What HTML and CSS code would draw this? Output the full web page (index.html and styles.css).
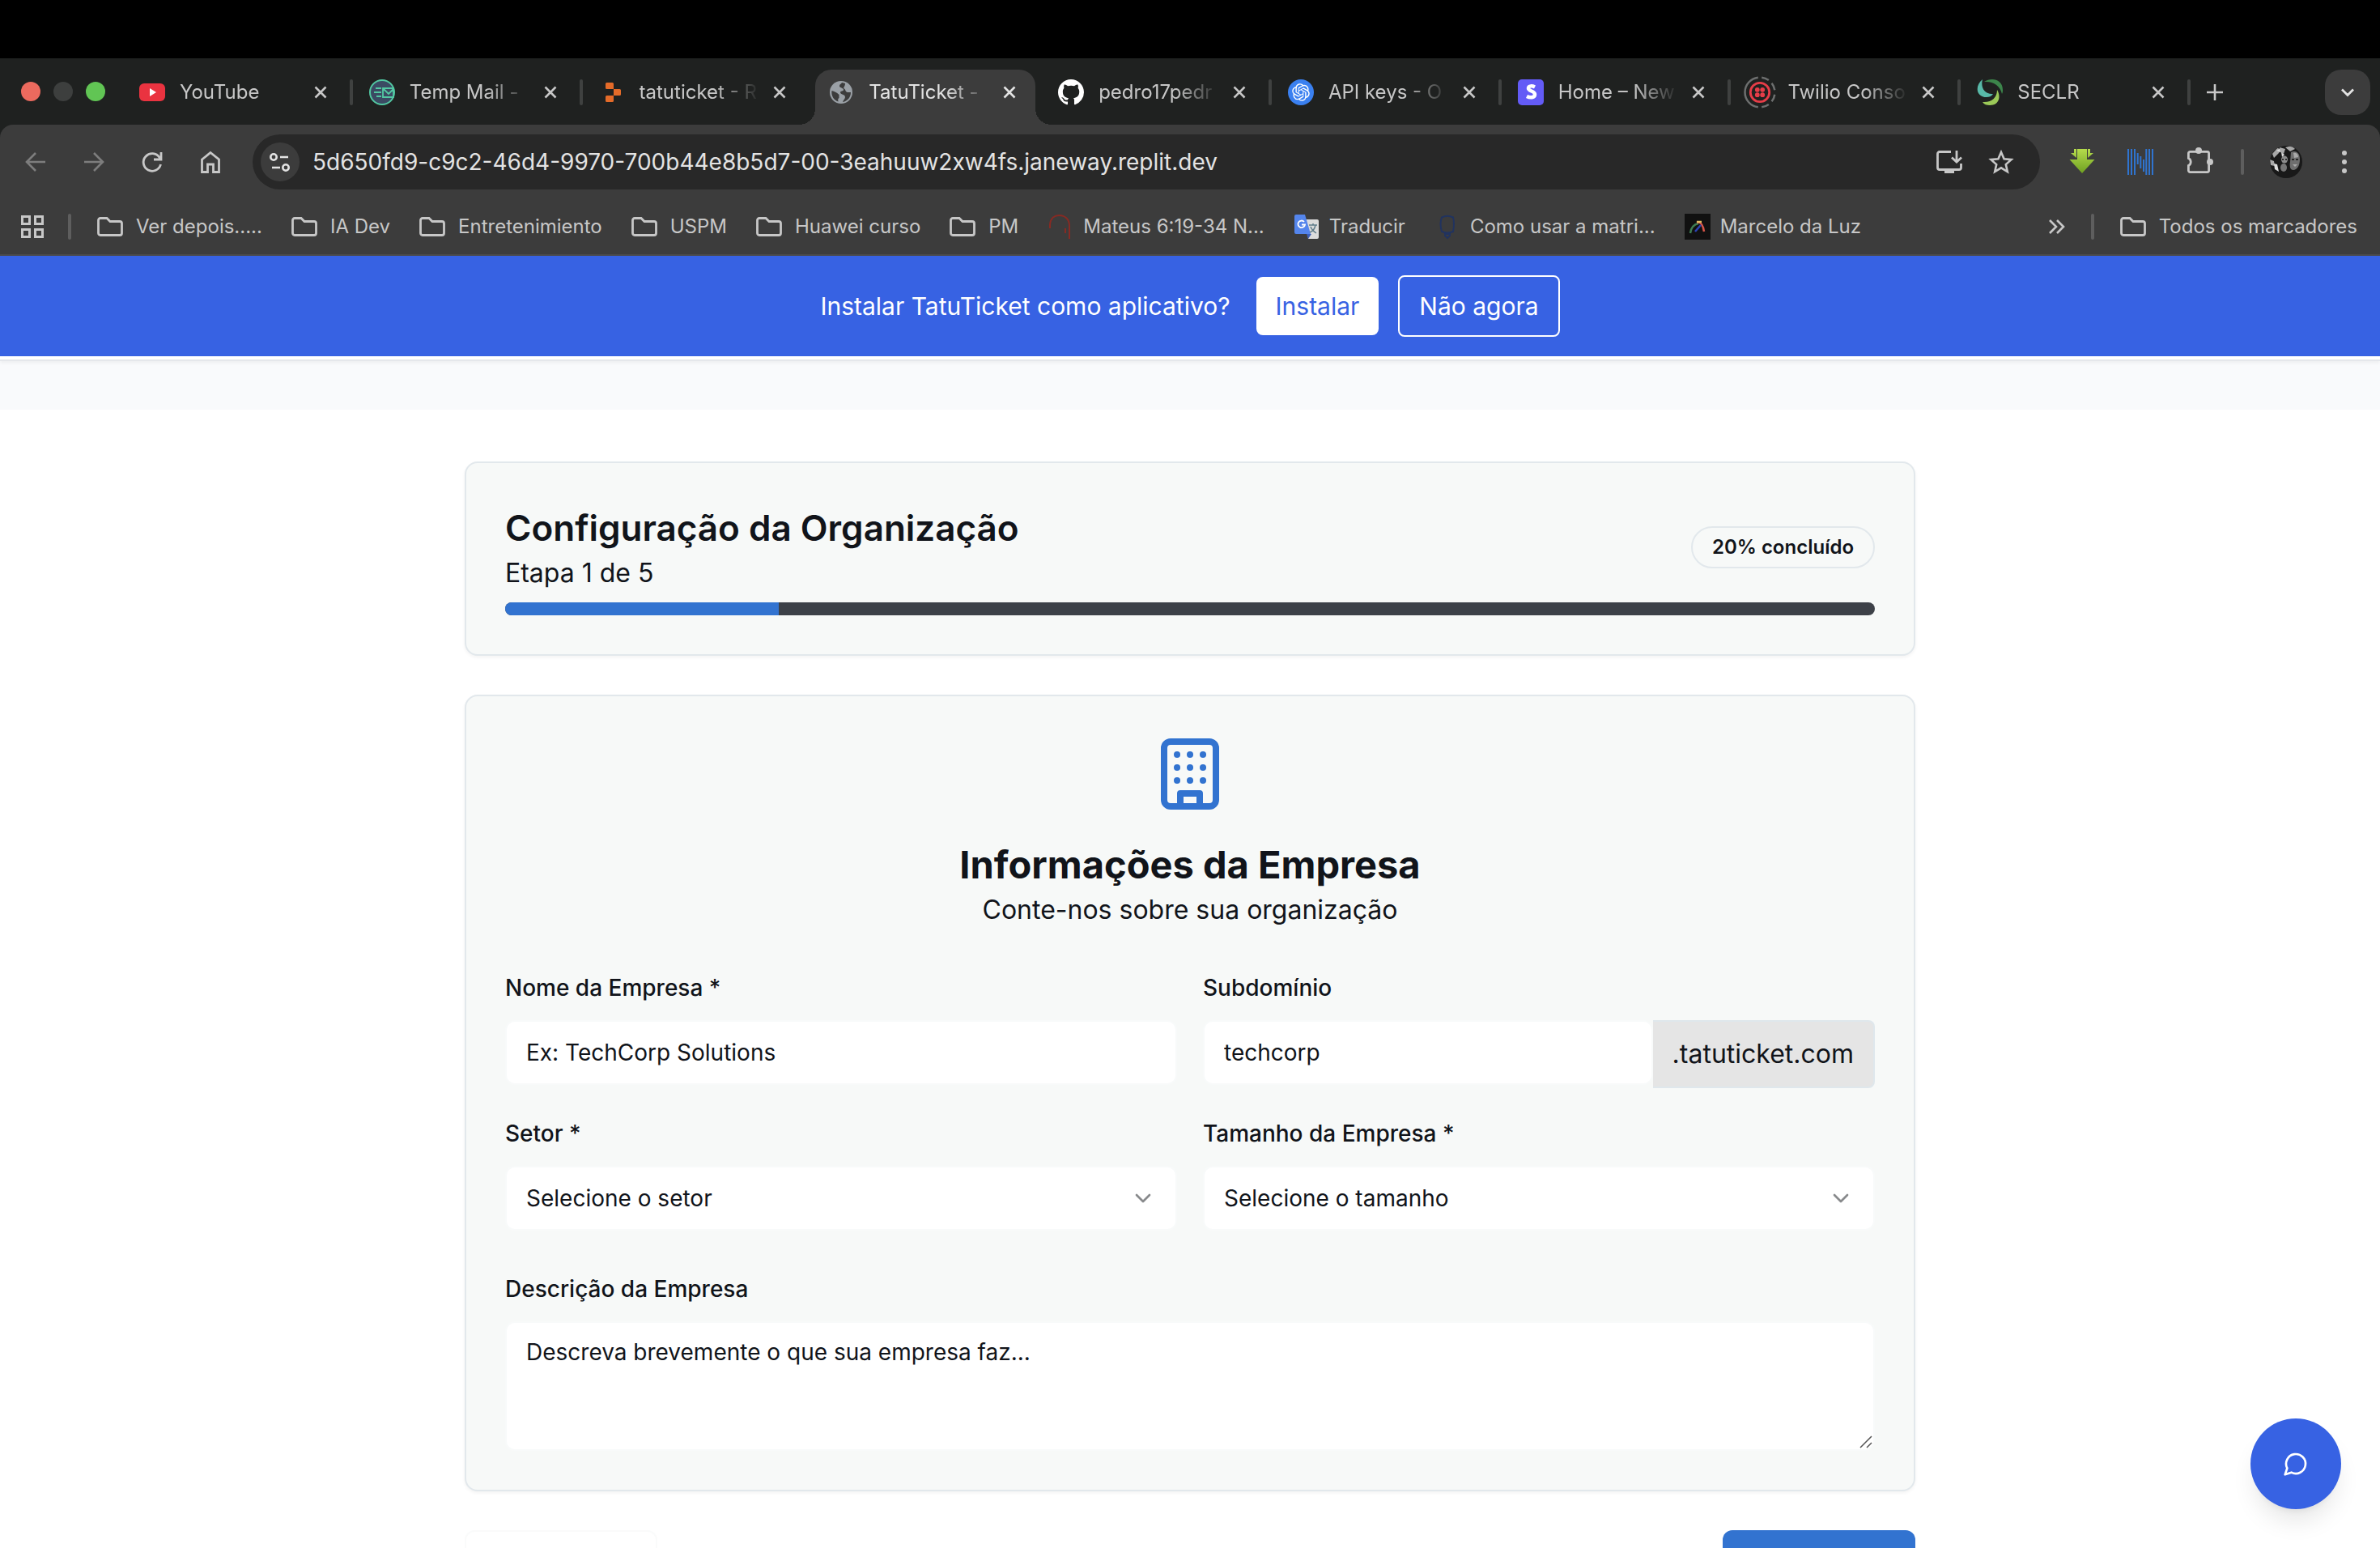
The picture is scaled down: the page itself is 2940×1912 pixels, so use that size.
FILE: index.html
```html
<!DOCTYPE html>
<html lang="pt-BR">
<head>
<meta charset="utf-8">
<meta name="viewport" content="width=device-width, initial-scale=1">
<title>TatuTicket - Configuração da Organização</title>
<link rel="stylesheet" href="styles.css">
</head>
<body>
<svg class="sprite" aria-hidden="true">
  <symbol id="close" viewBox="0 0 16 16"><path d="M1.500 1.500l13 13M14.500 1.500l-13 13" fill="none" stroke="currentColor" stroke-width="2.600"/></symbol>
  <symbol id="folder" viewBox="0 0 32 24"><path d="M4 1.500h8l4 4h12a2.500 2.500 0 0 1 2.500 2.500v12a2.500 2.500 0 0 1-2.500 2.500H4A2.500 2.500 0 0 1 1.500 20V4A2.500 2.500 0 0 1 4 1.500z" fill="none" stroke="currentColor" stroke-width="2.800"/></symbol>
  <symbol id="chevron" viewBox="0 0 24 24"><path d="m6 9 6 6 6-6" fill="none" stroke="currentColor" stroke-width="2" stroke-linecap="round" stroke-linejoin="round"/></symbol>
</svg>
<div class="browser">
  <div class="menubar"></div>
  <div class="tabstrip">
    <div class="lights"><span class="light red"></span><span class="light gray"></span><span class="light green"></span></div>
    <div class="tabs">
      <div class="tab">
        <svg class="fav" viewBox="0 0 32 32"><rect y="5" width="32" height="22" rx="6" fill="#ea3340"/><path d="M13 11l8 5-8 5z" fill="#fff"/></svg>
        <span class="tab-title">YouTube</span><button class="x" aria-label="Fechar"><svg><use href="#close"/></svg></button>
      </div>
      <div class="tab">
        <svg class="fav" viewBox="0 0 32 32"><circle cx="16" cy="16" r="15" fill="#3b4a63" stroke="#52c8a2" stroke-width="2"/><path d="M17 11h13v11H17zM18 12l6 6 6-6M8 11h7M6 16h9M9 21h6" fill="none" stroke="#52c8a2" stroke-width="1.800"/></svg>
        <span class="tab-title">Temp Mail -</span><button class="x" aria-label="Fechar"><svg><use href="#close"/></svg></button>
      </div>
      <div class="tab before-active">
        <svg class="fav" viewBox="0 0 32 32"><path d="M9.500 4h7a1.500 1.500 0 0 1 1.500 1.500V12H9.500A1.500 1.500 0 0 1 8 10.500v-5A1.500 1.500 0 0 1 9.500 4zM18 12h7.500a1.500 1.500 0 0 1 1.500 1.500v5a1.500 1.500 0 0 1-1.500 1.500H18zM9.500 20H18v6.500a1.500 1.500 0 0 1-1.500 1.500h-7A1.500 1.500 0 0 1 8 26.500v-5A1.500 1.500 0 0 1 9.500 20z" fill="#e46b29"/></svg>
        <span class="tab-title">tatuticket - R</span><button class="x" aria-label="Fechar"><svg><use href="#close"/></svg></button>
      </div>
      <div class="tab active">
        <svg class="fav" viewBox="0 0 32 32"><circle cx="16" cy="16" r="14" fill="#9aa0a6"/><path d="M17 4c-1 2-3 2-3 4 0 3 5 2 5 5 0 2-4 1-4 3 0 3 6 2 6 6 0 2-2 3-3 6 6-1 10-6 10-12h-4c-3 0-2-4-5-5 1-3 2-3 2-6zM4.500 14c3 1 6 2 9 5v4c-2 1-1 3-1 4.500C7 26 3.500 20 4.500 14z" fill="#3c3c3c"/></svg>
        <span class="tab-title">TatuTicket -</span><button class="x" aria-label="Fechar"><svg><use href="#close"/></svg></button>
      </div>
      <div class="tab">
        <svg class="fav" viewBox="0 0 16 16"><path fill="#fff" d="M8 0C3.580 0 0 3.580 0 8c0 3.540 2.290 6.530 5.470 7.590.4.070.55-.17.55-.38 0-.19-.01-.82-.01-1.490-2.010.37-2.530-.49-2.690-.94-.09-.23-.48-.94-.82-1.130-.28-.15-.68-.52-.01-.53.63-.01 1.080.58 1.230.82.72 1.210 1.870.87 2.330.66.07-.52.28-.87.51-1.070-1.780-.2-3.640-.89-3.640-3.950 0-.87.31-1.590.82-2.150-.08-.2-.36-1.020.08-2.120 0 0 .67-.21 2.200.82.64-.18 1.320-.27 2-.27s1.360.09 2 .27c1.530-1.040 2.200-.82 2.200-.82.44 1.100.16 1.920.08 2.120.51.56.82 1.270.82 2.150 0 3.070-1.870 3.750-3.650 3.950.29.25.54.73.54 1.480 0 1.070-.01 1.930-.01 2.200 0 .21.15.46.55.38A8.010 8.010 0 0 0 16 8c0-4.420-3.580-8-8-8z"/></svg>
        <span class="tab-title">pedro17pedr</span><button class="x" aria-label="Fechar"><svg><use href="#close"/></svg></button>
      </div>
      <div class="tab">
        <svg class="fav" viewBox="0 0 32 32"><circle cx="16" cy="16" r="16" fill="#3a80f0"/><g transform="translate(5.200 5.200) scale(.9)"><path fill="#fff" d="M22.2819 9.8211a5.9847 5.9847 0 0 0-.5157-4.9108 6.0462 6.0462 0 0 0-6.5098-2.9A6.0651 6.0651 0 0 0 4.9807 4.1818a5.9847 5.9847 0 0 0-3.9977 2.9 6.0462 6.0462 0 0 0 .7427 7.0966 5.98 5.98 0 0 0 .511 4.9107 6.051 6.051 0 0 0 6.5146 2.9001A5.9847 5.9847 0 0 0 13.2599 24a6.0557 6.0557 0 0 0 5.7718-4.2058 5.9894 5.9894 0 0 0 3.9977-2.9001 6.0557 6.0557 0 0 0-.7475-7.0729zm-9.022 12.6081a4.4755 4.4755 0 0 1-2.8764-1.0408l.1419-.0804 4.7783-2.7582a.7948.7948 0 0 0 .3927-.6813v-6.7369l2.02 1.1686a.071.071 0 0 1 .038.052v5.5826a4.504 4.504 0 0 1-4.4945 4.4944zm-9.6607-4.1254a4.4708 4.4708 0 0 1-.5346-3.0137l.142.0852 4.783 2.7582a.7712.7712 0 0 0 .7806 0l5.8428-3.3685v2.3324a.0804.0804 0 0 1-.0332.0615L9.74 19.9502a4.4992 4.4992 0 0 1-6.1408-1.6464zM2.3408 7.8956a4.485 4.485 0 0 1 2.3655-1.9728V11.6a.7664.7664 0 0 0 .3879.6765l5.8144 3.3543-2.0201 1.1685a.0757.0757 0 0 1-.071 0l-4.8303-2.7865A4.504 4.504 0 0 1 2.3408 7.872zm16.5963 3.8558L13.1038 8.364 15.1192 7.2a.0757.0757 0 0 1 .071 0l4.8303 2.7913a4.4944 4.4944 0 0 1-.6765 8.1042v-5.6772a.79.79 0 0 0-.407-.667zm2.0107-3.0231l-.142-.0852-4.7735-2.7818a.7759.7759 0 0 0-.7854 0L9.409 9.2297V6.8974a.0662.0662 0 0 1 .0284-.0615l4.8303-2.7866a4.4992 4.4992 0 0 1 6.6802 4.66zM8.3065 12.863l-2.02-1.1638a.0804.0804 0 0 1-.038-.0567V6.0742a4.4992 4.4992 0 0 1 7.3757-3.4537l-.142.0805L8.704 5.459a.7948.7948 0 0 0-.3927.6813zm1.0976-2.3654l2.602-1.4998 2.6069 1.4998v2.9994l-2.5974 1.4997-2.6067-1.4997Z"/></g></svg>
        <span class="tab-title">API keys - O</span><button class="x" aria-label="Fechar"><svg><use href="#close"/></svg></button>
      </div>
      <div class="tab">
        <svg class="fav" viewBox="0 0 32 32"><rect width="32" height="32" rx="5" fill="#635bf6"/><path d="M21 9.500c-3-1.500-8-2-8 1.500 0 4 8 3 8 7.500 0 4.500-6 4.500-10 2.500" fill="none" stroke="#fff" stroke-width="4.500"/></svg>
        <span class="tab-title">Home – New</span><button class="x" aria-label="Fechar"><svg><use href="#close"/></svg></button>
      </div>
      <div class="tab">
        <svg class="fav wide" viewBox="0 0 40 40"><circle cx="20" cy="20" r="18.500" fill="none" stroke="#6d6f6f" stroke-width="2.500" pathLength="100" stroke-dasharray="0 2 8 4.500 8 5 8 4.500 8 4 46 2" transform="rotate(-90 20 20)"/><circle cx="20" cy="20" r="11.700" fill="none" stroke="#e63d48" stroke-width="2.800"/><g fill="#e63d48"><circle cx="16.800" cy="16.800" r="2.900"/><circle cx="23.200" cy="16.800" r="2.900"/><circle cx="16.800" cy="23.200" r="2.900"/><circle cx="23.200" cy="23.200" r="2.900"/></g></svg>
        <span class="tab-title">Twilio Conso</span><button class="x" aria-label="Fechar"><svg><use href="#close"/></svg></button>
      </div>
      <div class="tab">
        <svg class="fav" viewBox="0 0 32 32"><path d="M7 0C-3 8-1 22 12 22c3 0 6-1 8-4C11 19 4 12 7 0z" fill="#58b9a8"/><path d="M9 3c9-6 23-3 23 10 0 2 0 3-1 5C29 8 20 2 9 3z" fill="#3c854b"/><path d="M25 13c5 8 3 19-9 19-4 0-7-1-9-4 11 1 18-5 18-15z" fill="#9bc958"/></svg>
        <span class="tab-title">SECLR</span><button class="x" aria-label="Fechar"><svg><use href="#close"/></svg></button>
      </div>
    </div>
    <button class="newtab" aria-label="Nova guia"><svg viewBox="0 0 20 20"><path d="M10 0v20M0 10h20" stroke="currentColor" stroke-width="2.600"/></svg></button>
    <button class="tabsearch" aria-label="Pesquisar guias"><svg viewBox="0 0 16 16"><path d="M1 4.500l7 7 7-7" fill="none" stroke="currentColor" stroke-width="2.800"/></svg></button>
  </div>

  <div class="toolbar-back"><div class="toolbar">
    <button class="tool dim" aria-label="Voltar"><svg viewBox="0 0 32 32"><path d="M28 16H6M16 5L5 16l11 11" fill="none" stroke="currentColor" stroke-width="2.600"/></svg></button>
    <button class="tool dim" aria-label="Avançar"><svg viewBox="0 0 32 32"><path d="M4 16h22M16 5l11 11-11 11" fill="none" stroke="currentColor" stroke-width="2.600"/></svg></button>
    <button class="tool" aria-label="Recarregar"><svg viewBox="0 0 32 32"><path d="M26.500 19A10.800 10.800 0 1 1 25 10.500l1.500 2M27 4v9h-9" fill="none" stroke="currentColor" stroke-width="2.800"/></svg></button>
    <button class="tool" aria-label="Página inicial"><svg viewBox="0 0 32 32"><path d="M5.500 13L16 4.500 26.500 13v15.500h-7V19h-7v9.500h-7z" fill="none" stroke="currentColor" stroke-width="2.800"/></svg></button>
    <div class="omnibox">
      <button class="site" aria-label="Informações do site"><svg viewBox="0 0 28 28"><path d="M14 8h10M4 21h10" stroke="currentColor" stroke-width="2.600"/><g fill="none" stroke="currentColor" stroke-width="2.600"><circle cx="6" cy="8" r="3.700"/><circle cx="21" cy="21" r="3.700"/></g></svg></button>
      <input class="url" aria-label="Endereço" value="5d650fd9-c9c2-46d4-9970-700b44e8b5d7-00-3eahuuw2xw4fs.janeway.replit.dev">
      <button class="omni" aria-label="Instalar"><svg viewBox="0 0 32 32"><path d="M18 3.500H4A2.500 2.500 0 0 0 1.500 6v17A2.500 2.500 0 0 0 4 25.500h24a2.500 2.500 0 0 0 2.500-2.500v-5M25 2v14M19 10.500l6 5.500 6-5.500" fill="none" stroke="currentColor" stroke-width="2.800"/><path d="M10 25h12v5H10z" fill="currentColor"/></svg></button>
      <button class="omni" aria-label="Favoritar"><svg viewBox="0 0 32 32"><path d="M16 4l3.600 8.300 9 .8-6.800 6 2 8.900L16 23.300 8.200 28l2-8.900-6.800-6 9-.8z" fill="none" stroke="currentColor" stroke-width="2.600"/></svg></button>
    </div>
    <div class="extensions">
      <button class="tool" aria-label="Downloads"><svg viewBox="0 0 32 32"><defs><linearGradient id="lime" x1="0" y1="0" x2="0" y2="1"><stop offset="0" stop-color="#b5dc4c"/><stop offset="1" stop-color="#6fa022"/></linearGradient></defs><path d="M10 0h12v13h9.500L16 30 .5 13H10zM6 0h3v11L2 5h4zM23 0h3v5h4l-7 6z" fill="url(#lime)"/></svg></button>
      <button class="tool" aria-label="Extensão N"><svg viewBox="0 0 32 32"><path d="M1 0v32M5 0v32M9 0v32M12.700 5v14M16.300 9v15M20 13v15M23.300 0v32M27 0v32M31 0v32" stroke="#2f74d0" stroke-width="2"/></svg></button>
      <button class="tool" aria-label="Extensões"><svg viewBox="0 0 32 32" overflow="visible"><path d="M3.400 11.500V5.400a2 2 0 0 1 2-2h21.200a2 2 0 0 1 2 2v21.200a2 2 0 0 1-2 2H5.400a2 2 0 0 1-2-2v-6.100a5 5 0 0 0 0-9z" fill="none" stroke="currentColor" stroke-width="2.800"/><circle cx="16" cy="2" r="4" fill="currentColor"/><circle cx="30" cy="16" r="4" fill="currentColor"/></svg></button>
      <span class="divider"></span>
      <button class="tool" aria-label="Perfil"><svg class="avatar" viewBox="0 0 40 40"><defs><clipPath id="round"><circle cx="20" cy="20" r="20"/></clipPath></defs><g clip-path="url(#round)"><rect width="40" height="40" fill="#191919"/><path d="M3 10l6-7 5 1-3 5-6 6zM12 2l7 2-2 6-4-2zM19 2l8-2 4 4-6 3zM0 17l5 2 1 6-5-1z" fill="#a8a8a8"/><path d="M8 6l4-2 1 4zM5 22l4 1 2 9-5-3zM14 8l4 3-3 3z" fill="#dcdcdc"/><ellipse cx="18" cy="17" rx="4" ry="4.500" fill="#8d8d8d"/><ellipse cx="17" cy="27" rx="4" ry="5" fill="#777"/><path d="M26 8c7-3 11 2 11 9 0 8-4 13-8 13s-5-5-4-10z" fill="#6f6f6f"/><path d="M29 9c4-1 6 2 6 5l-5 1zM28 23h6l-3 3z" fill="#a9a9a9"/><path d="M27 17h3M32 17h3M15 17h2M19 17h2" stroke="#111" stroke-width="1.500"/></g></svg></button>
      <button class="tool" aria-label="Menu"><svg viewBox="0 0 32 32"><g fill="currentColor"><circle cx="16" cy="5" r="3"/><circle cx="16" cy="16" r="3"/><circle cx="16" cy="27" r="3"/></g></svg></button>
    </div>
  </div></div>

  <nav class="bookmarks">
    <button class="apps" aria-label="Apps"><svg viewBox="0 0 28 28"><path d="M1.500 1.500h9v9h-9zM17.500 1.500h9v9h-9zM1.500 17.500h9v9h-9zM17.500 17.500h9v9h-9z" fill="none" stroke="currentColor" stroke-width="3"/></svg></button>
    <span class="divider"></span>
    <div class="marks">
      <a href="#"><svg class="folder"><use href="#folder"/></svg>Ver depois.....</a>
      <a href="#"><svg class="folder"><use href="#folder"/></svg>IA Dev</a>
      <a href="#"><svg class="folder"><use href="#folder"/></svg>Entretenimiento</a>
      <a href="#"><svg class="folder"><use href="#folder"/></svg>USPM</a>
      <a href="#"><svg class="folder"><use href="#folder"/></svg>Huawei curso</a>
      <a href="#"><svg class="folder"><use href="#folder"/></svg>PM</a>
      <a class="site-mark" href="#"><svg class="fav" viewBox="0 0 32 32"><path d="M3 18V13C4 5 9 2 14 2c8 0 13 5 13 13v16M22 18v6" fill="none" stroke="#872a23" stroke-width="2"/></svg>Mateus 6:19-34 N...</a>
      <a class="site-mark" href="#"><svg class="fav" viewBox="0 0 32 32"><path d="M15 7h14a2 2 0 0 1 2 2v20a2 2 0 0 1-2 2H18z" fill="#dcdcdc"/><path d="M16 25l6 0-4 6z" fill="#3c5fb8"/><path d="M3 1h11l7 24H3a2 2 0 0 1-2-2V3a2 2 0 0 1 2-2z" fill="#5485ec"/><path d="M13 10a4.300 4.300 0 1 0 1 3.500h-4" fill="none" stroke="#fff" stroke-width="1.800"/><path d="M19 14h10M24 12v2M27 14c-1 5-4 8-7 9M21 16c1 3 4 6 7 8" fill="none" stroke="#607d8b" stroke-width="1.500"/></svg>Traducir</a>
      <a class="site-mark" href="#"><svg class="fav" viewBox="0 0 32 32"><path d="M9 4.500Q16 1 23 4.500Q25 12 23 22Q16 25 9 22Q6 12 9 4.500zM13 25h6v2l-3 3-3-3z" fill="none" stroke="#21335f" stroke-width="2"/></svg>Como usar a matri...</a>
      <a class="site-mark" href="#"><svg class="fav" viewBox="0 0 32 32"><rect width="32" height="32" fill="#111"/><path d="M7 24c1-7 5-11 10-12" fill="none" stroke="#3e7c52" stroke-width="2.500"/><path d="M15 11c5-2 8 4 9 11" fill="none" stroke="#d8564a" stroke-width="2.500"/><path d="M13 22l7-8" stroke="#2c43b5" stroke-width="2.500"/><path d="M15 10h6" stroke="#e2bd62" stroke-width="2.500"/></svg>Marcelo da Luz</a>
    </div>
    <button class="more" aria-label="Mais favoritos"><svg viewBox="0 0 20 20"><path d="M1 2l8 8-8 8M10 2l8 8-8 8" fill="none" stroke="currentColor" stroke-width="2.600"/></svg></button>
    <span class="divider"></span>
    <a class="all" href="#"><svg class="folder"><use href="#folder"/></svg>Todos os marcadores</a>
  </nav>

  <div class="page">
    <div class="banner">
      <span class="banner-text">Instalar TatuTicket como aplicativo?</span>
      <div class="banner-actions">
        <button class="install">Instalar</button>
        <button class="later">Não agora</button>
      </div>
    </div>
    <div class="site-header"></div>
    <div class="strip"></div>
    <main class="content">
      <section class="card">
        <div class="head">
          <div>
            <h1>Configuração da Organização</h1>
            <p>Etapa 1 de 5</p>
          </div>
          <span class="badge">20% concluído</span>
        </div>
        <div class="progress" role="progressbar" aria-valuenow="20" aria-valuemin="0" aria-valuemax="100"><div class="bar" style="width:20%"></div></div>
      </section>

      <section class="card">
        <div class="intro">
          <svg class="building" viewBox="0 0 24 24" fill="none" stroke="currentColor" stroke-width="2" stroke-linecap="round" stroke-linejoin="round"><rect width="16" height="20" x="4" y="2" rx="2" ry="2"/><path d="M9 22v-4h6v4M8 6h.01M16 6h.01M12 6h.01M12 10h.01M12 14h.01M16 10h.01M16 14h.01M8 10h.01M8 14h.01"/></svg>
          <h2>Informações da Empresa</h2>
          <p>Conte-nos sobre sua organização</p>
        </div>
        <form class="form">
          <div class="grid">
            <div class="field"><label for="name">Nome da Empresa *</label><input class="control" id="name" placeholder="Ex: TechCorp Solutions"></div>
            <div class="field"><label for="sub">Subdomínio</label><div class="joined"><input class="control" id="sub" placeholder="techcorp"><span class="suffix">.tatuticket.com</span></div></div>
            <div class="field"><label for="sector">Setor *</label><div class="stack"><select class="control" id="sector"><option>Selecione o setor</option></select><svg class="caret"><use href="#chevron"/></svg></div></div>
            <div class="field"><label for="size">Tamanho da Empresa *</label><div class="stack"><select class="control" id="size"><option>Selecione o tamanho</option></select><svg class="caret"><use href="#chevron"/></svg></div></div>
          </div>
          <div class="field"><label for="about">Descrição da Empresa</label><div class="stack"><textarea class="control" id="about" placeholder="Descreva brevemente o que sua empresa faz..."></textarea><svg class="grip" viewBox="0 0 16 16"><path d="M1 15L15 1M9 15l6-6" stroke="currentColor" stroke-width="1.500"/></svg></div></div>
        </form>
      </section>

      <div class="steps">
        <button class="prev" aria-label="Anterior" disabled></button>
        <button class="next" aria-label="Próximo"></button>
      </div>
    </main>
    <button class="chat" aria-label="Abrir chat"><svg viewBox="0 0 24 24" fill="none" stroke="currentColor" stroke-width="2" stroke-linecap="round" stroke-linejoin="round"><path d="M7.900 20A9 9 0 1 0 4 16.100L2 22Z"/></svg></button>
  </div>
</div>
</body>
</html>
```
FILE: styles.css
```css
*, *::before, *::after { box-sizing: border-box; }
body { margin: 0; font-family: Inter, "Liberation Sans", sans-serif; color: #11141a; background: #fff; }
button, input, select, textarea { font: inherit; color: inherit; }
button { border: 0; padding: 0; background: none; display: flex; align-items: center; justify-content: center; }
h1, h2, p { margin: 0; }
a { color: inherit; text-decoration: none; }
svg { display: block; flex: none; }
.sprite { position: absolute; width: 0; height: 0; }

.browser { height: 100vh; display: flex; flex-direction: column; overflow: hidden; }
.menubar { height: 72px; flex: none; background: #000; }

/* Tab strip */
.tabstrip { height: 82px; flex: none; display: flex; background: #1f2120; padding-top: 14px; color: #c7c7c7; font-size: 24px; }
.lights { width: 156px; display: flex; gap: 16px; padding: 15px 0 0 26px; }
.light { width: 24px; height: 24px; border-radius: 50%; }
.red { background: #ec6a5e; }
.gray { background: #3d3f3e; }
.green { background: #61c554; }
.tabs { flex: 1; display: flex; min-width: 0; }
.tab { flex: 1; min-width: 0; position: relative; display: flex; align-items: center; padding: 0 36px 12px 16px; }
.tab::after { content: ""; position: absolute; right: 4px; top: 12px; width: 4px; height: 32px; border-radius: 2px; background: #3f4140; }
.fav { width: 32px; height: 32px; }
.fav.wide { width: 40px; height: 40px; margin: 0 -4px; }
.tab-title { flex: 1; min-width: 0; margin: 0 16px 0 18px; overflow: hidden; white-space: nowrap; line-height: 32px; -webkit-mask-image: linear-gradient(90deg, #000 calc(100% - 56px), transparent); mask-image: linear-gradient(90deg, #000 calc(100% - 56px), transparent); }
.x { width: 16px; height: 16px; }
.x svg { width: 16px; height: 16px; }
.before-active::after { display: none; }
.tab.active { color: #e3e3e3; z-index: 1; }
.tab.active > * { z-index: 1; }
.tab.active::before { content: ""; position: absolute; left: 0; right: 12px; top: 0; bottom: 0; background: #3c3c3c; border-radius: 20px 20px 0 0; }
.tab.active::after { left: -20px; right: -8px; top: auto; bottom: 0; width: auto; height: 20px; border-radius: 0; background: radial-gradient(circle at 0 0, transparent 20px, #3c3c3c 20px) left / 20px 20px no-repeat, radial-gradient(circle at 100% 0, transparent 20px, #3c3c3c 20px) right / 20px 20px no-repeat; }
.newtab { width: 52px; height: 56px; margin-right: 110px; }
.newtab svg { width: 20px; height: 20px; }
.tabsearch { width: 56px; height: 56px; margin-right: 12px; border-radius: 20px; background: #3c3c3c; color: #e3e3e3; }
.tabsearch svg { width: 16px; height: 16px; }

/* Toolbar */
.toolbar-back { flex: none; background: #1f2120; }
.toolbar { height: 92px; display: flex; align-items: center; padding: 0 8px; background: #3c3c3c; border-radius: 16px 16px 0 0; color: #c7c7c7; }
.tool { width: 72px; height: 72px; }
.tool svg { width: 32px; height: 32px; }
.tool .avatar { width: 40px; height: 40px; }
.dim { color: #7d7d7d; }
.omnibox { flex: 1; height: 68px; margin: 0 16px; border-radius: 34px; background: #282828; display: flex; align-items: center; padding: 0 16px 0 10px; }
.site { width: 48px; height: 48px; border-radius: 50%; background: #3c3c3c; color: #e3e3e3; }
.site svg { width: 28px; height: 28px; }
.url { flex: 1; min-width: 0; margin-left: 16px; padding: 0; border: 0; background: none; color: #e3e3e3; font-size: 28px; }
.omni { width: 64px; height: 64px; }
.omni svg { width: 32px; height: 32px; }
.extensions { display: flex; align-items: center; }
.divider { width: 4px; height: 32px; border-radius: 2px; background: #5e5e5e; margin: 0 16px; flex: none; }

/* Bookmarks */
.bookmarks { height: 70px; flex: none; display: flex; align-items: center; padding: 0 28px 0 26px; background: #3c3c3c; border-bottom: 2px solid #4a4a4a; color: #c7c7c7; font-size: 24px; line-height: 32px; white-space: nowrap; }
.apps svg { width: 28px; height: 28px; }
.bookmarks .divider { margin: 0 32px; }
.bookmarks .apps + .divider { margin-left: 30px; }
.marks { flex: 1; display: flex; gap: 36px; }
.bookmarks a { display: flex; align-items: center; gap: 16px; }
.bookmarks .site-mark { gap: 12px; }
.folder { width: 32px; height: 24px; }
.more svg { width: 20px; height: 20px; }

/* Page */
.page { flex: 1; min-height: 0; overflow: hidden; font-size: 32px; line-height: 48px; }
.banner { display: flex; justify-content: center; align-items: center; gap: 32px; padding: 24px; background: #3762e3; color: #fff; font-size: 30px; }
.banner-actions { display: flex; align-items: center; gap: 24px; }
.install { padding: 12px 24px; border-radius: 8px; background: #fff; color: #3762e3; }
.later { padding: 12px 24px; border: 2px solid #fff; border-radius: 8px; }
.site-header { height: 6px; background: #fff; border-bottom: 2px solid #e5e7eb; box-shadow: 0 2px 4px rgba(0, 0, 0, .05); position: relative; }
.strip { height: 60px; background: #f9fafc; }
.content { max-width: 1792px; margin: 64px auto 0; display: flex; flex-direction: column; gap: 48px; }
.card { padding: 48px; border: 2px solid #e2e8ec; border-radius: 16px; background: #f7f9f8; box-shadow: 0 2px 4px rgba(0, 0, 0, .05); }
.head { display: flex; justify-content: space-between; align-items: center; }
h1, h2 { line-height: 64px; }
h1 { font-size: 44px; font-weight: 600; }
h2 { font-size: 47px; font-weight: 700; }
.badge { padding: 8px 24px; border: 2px solid #e2e8ec; border-radius: 26px; font-size: 24px; line-height: 32px; font-weight: 600; }
.progress { height: 16px; margin-top: 12px; border-radius: 8px; background: #3d4148; overflow: hidden; }
.bar { height: 100%; background: #3273d0; }
.intro { text-align: center; }
.building { width: 96px; height: 96px; margin: 0 auto 32px; color: #3273d0; }
.form { margin-top: 48px; display: flex; flex-direction: column; gap: 48px; }
.grid { display: grid; grid-template-columns: 1fr 1fr; gap: 32px; }
.field { display: flex; flex-direction: column; gap: 16px; }
label { font-size: 28px; font-weight: 500; }
.control { width: 100%; height: 80px; padding: 0 24px; border: 2px solid #f8fafa; border-radius: 12px; background: #fff; font-size: 28px; line-height: 40px; }
.control::placeholder { color: #11141a; opacity: 1; }
.joined { display: flex; align-items: flex-start; }
.joined .control { flex: 1; width: auto; min-width: 0; }
.suffix { padding: 16px 24px; border: 2px solid #dfe7ec; border-left: 0; border-radius: 0 8px 8px 0; background: #e5e5e5; }
.stack { display: grid; align-items: center; }
.stack > * { grid-area: 1 / 1; }
select.control { appearance: none; }
.caret { width: 32px; height: 32px; margin-right: 26px; justify-self: end; color: #888a8c; pointer-events: none; }
textarea.control { display: block; height: 160px; padding: 16px 24px; resize: none; }
.grip { width: 16px; height: 16px; margin: 0 3px 3px 0; place-self: end; color: #555; pointer-events: none; }
.steps { display: flex; justify-content: space-between; }
.steps button { width: 238px; height: 80px; border-radius: 12px; }
.prev { border: 2px solid #fafbfb; background: #fff; }
.next { background: #3273d0; }
.chat { position: fixed; right: 48px; bottom: 48px; width: 112px; height: 112px; border-radius: 50%; background: #3762e3; color: #fff; box-shadow: 0 20px 30px -6px rgba(0, 0, 0, .1), 0 8px 12px -8px rgba(0, 0, 0, .1); }
.chat svg { width: 32px; height: 32px; }
```
